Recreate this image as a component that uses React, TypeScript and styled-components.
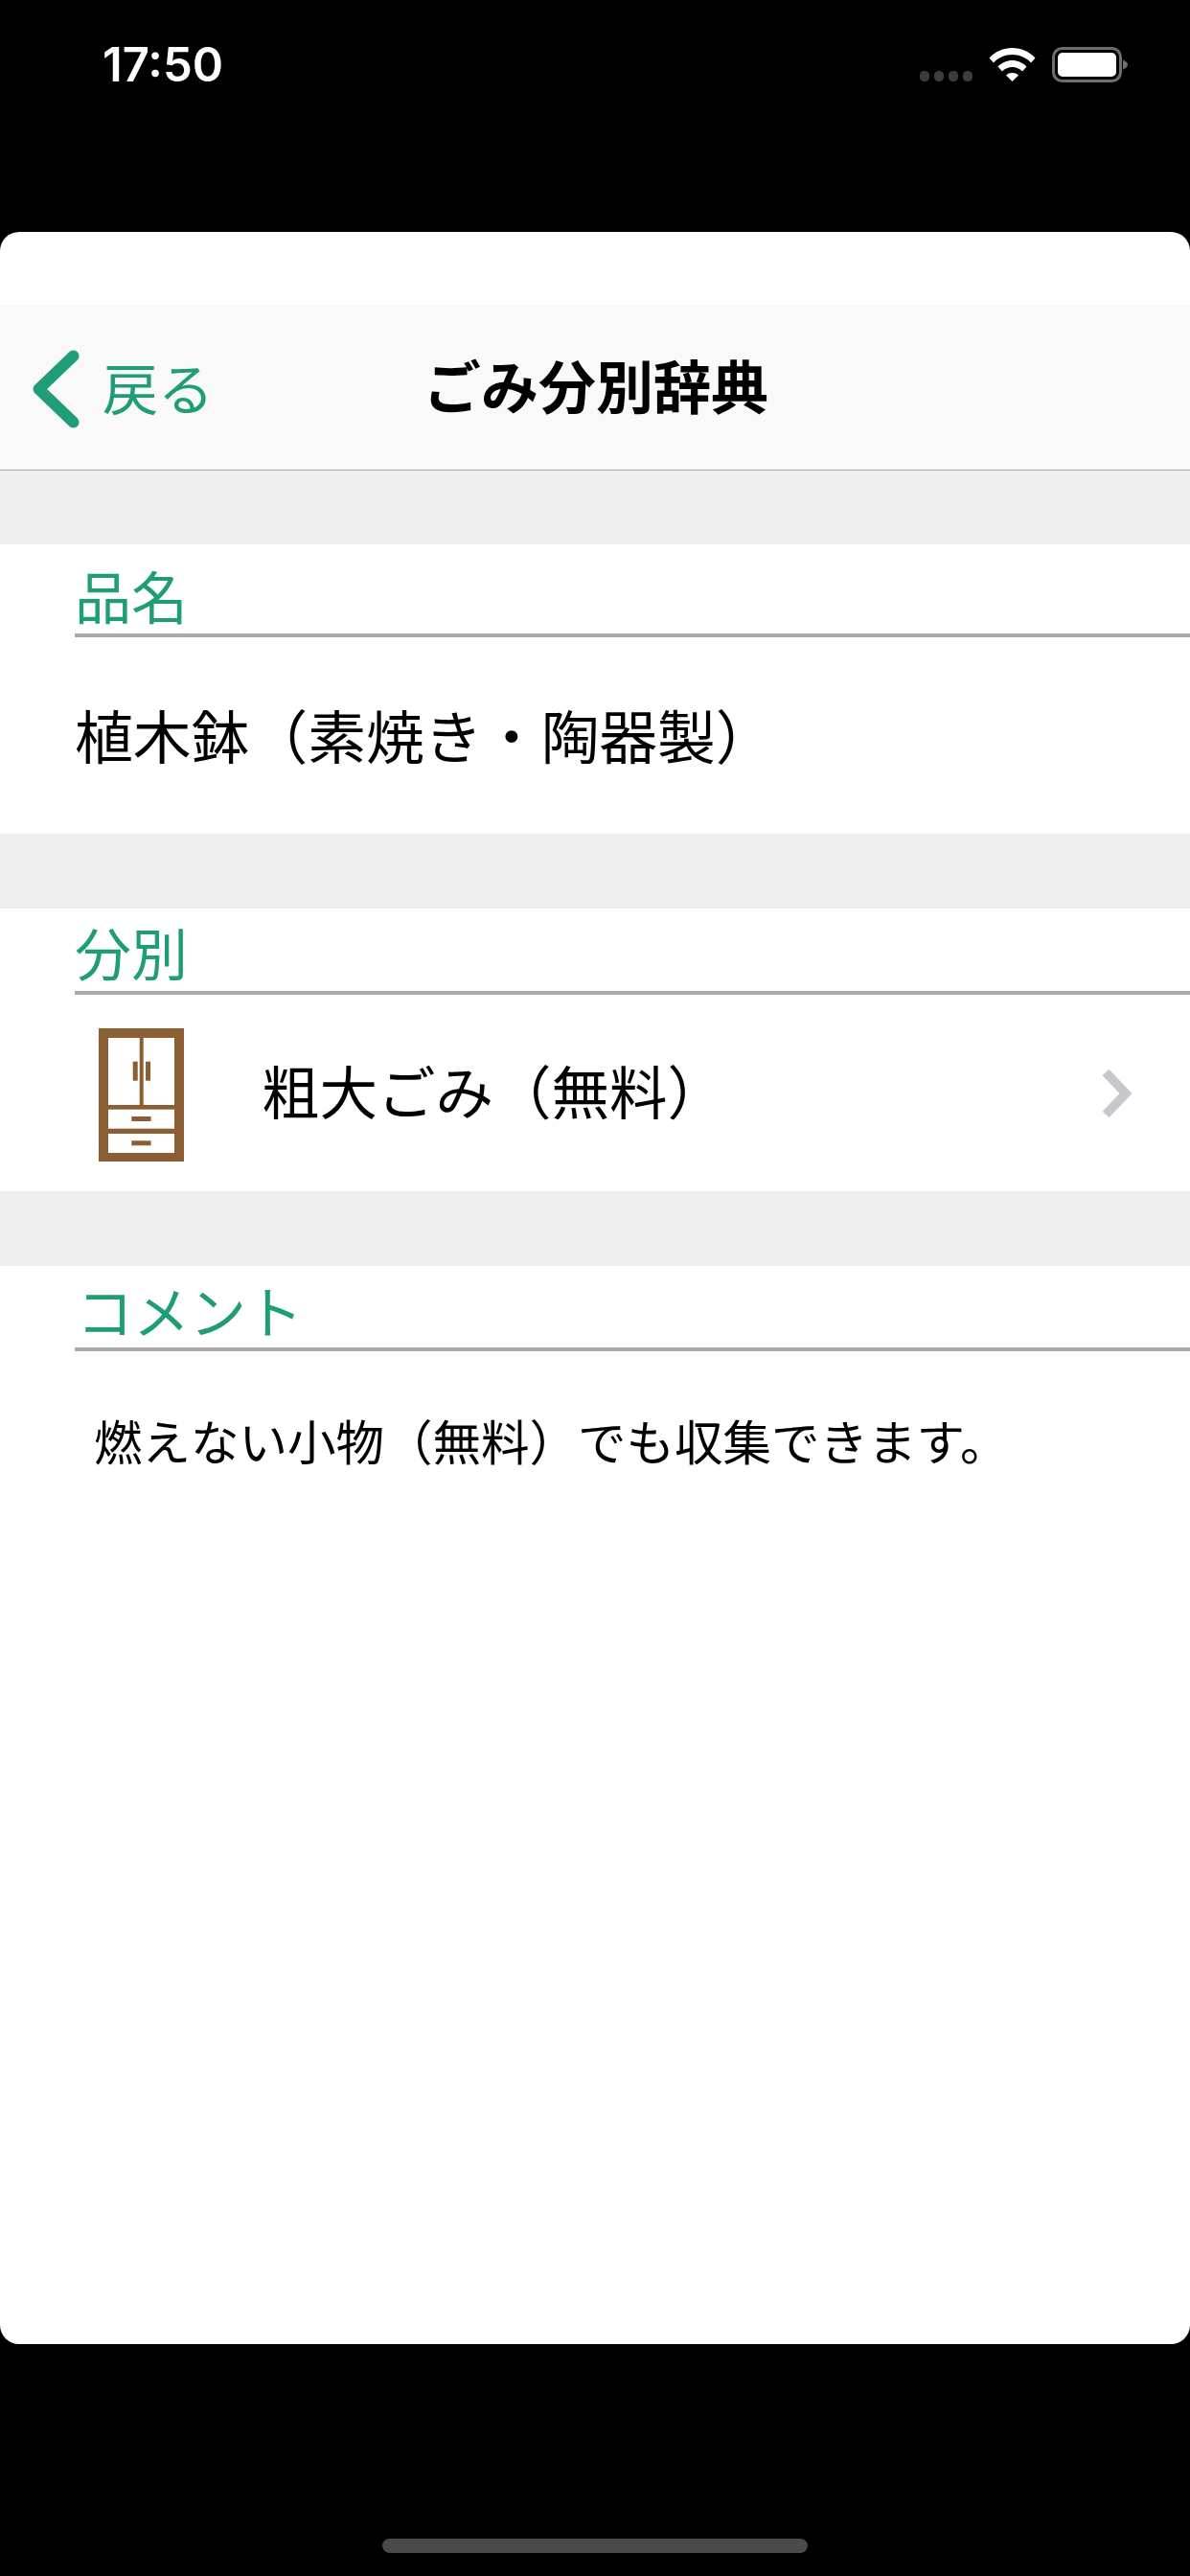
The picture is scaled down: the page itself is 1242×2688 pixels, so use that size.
import React from "react";
import styled, { createGlobalStyle } from "styled-components";

const green = "#1f9d76";
const jp = `"Noto Sans CJK JP", "Noto Sans", sans-serif`;

const Global = createGlobalStyle`
  html, body { margin: 0; padding: 0; background: #000; }
  body { font-family: ${jp}; }
`;

const Screen = styled.div`
  width: 1242px;
  height: 2688px;
  background: #000;
  display: flex;
  flex-direction: column;
  overflow: hidden;
`;

const StatusBar = styled.div`
  height: 242px;
  flex: none;
  box-sizing: border-box;
  padding: 42px 64px 0 107px;
  display: flex;
  align-items: flex-start;
  justify-content: space-between;
`;

const Time = styled.div`
  font-family: Inter, "Liberation Sans", sans-serif;
  font-size: 49px;
  line-height: 52px;
  font-weight: 600;
  color: #fff;
`;

const StatusIcons = styled.div`
  display: flex;
  align-items: flex-start;
  padding-top: 7px;
`;

const Sheet = styled.div`
  height: 2204px;
  flex: none;
  background: #fff;
  border-radius: 20px;
  display: flex;
  flex-direction: column;
  overflow: hidden;
`;

const NavBar = styled.div`
  margin-top: 77px;
  height: 171px;
  flex: none;
  box-sizing: border-box;
  background: #f9f9f9;
  position: relative;
  display: flex;
  align-items: center;
  justify-content: center;
  padding: 0 0 8px 2px;
`;

const NavLine = styled.div`
  height: 1px;
  flex: none;
  background: #a7a7a7;
`;

const BackButton = styled.div`
  position: absolute;
  left: 34px;
  top: 46px;
  display: flex;
  align-items: center;
  gap: 24px;
  color: ${green};
  font-size: 58px;
  line-height: 81px;
`;

const BackText = styled.span`
  position: relative;
  top: -3px;
`;

const Title = styled.div`
  font-size: 60px;
  font-weight: 700;
  color: #000;
  line-height: 80px;
`;

const Gap = styled.div<{ $height: number }>`
  height: ${(p) => p.$height}px;
  flex: none;
  background: #efefef;
`;

const Section = styled.div<{ $height: number }>`
  height: ${(p) => p.$height}px;
  flex: none;
  background: #fff;
  display: flex;
  flex-direction: column;
`;

const Label = styled.div<{ $height: number; $top: number; $indent?: number }>`
  flex: none;
  margin-left: 78px;
  padding-left: ${(p) => p.$indent ?? 0}px;
  padding-top: ${(p) => p.$top}px;
  height: ${(p) => p.$height}px;
  box-sizing: border-box;
  border-bottom: 4px solid #a9a9a9;
  font-size: 59px;
  line-height: 60px;
  color: ${green};
`;

const Name = styled.div`
  padding: 65px 0 0 78px;
  font-size: 60.8px;
  line-height: 72px;
  color: #000;
`;

const Row = styled.div`
  flex: 1;
  display: flex;
  align-items: center;
  padding-left: 103px;
  padding-right: 60px;
`;

const RowText = styled.div`
  flex: 1;
  margin-left: 81px;
  font-size: 60.5px;
  line-height: 72px;
  position: relative;
  top: -4px;
  color: #000;
`;

const Comment = styled.div`
  padding: 56px 0 0 98px;
  font-size: 50.5px;
  line-height: 72px;
  color: #000;
`;

const HomeArea = styled.div`
  flex: 1;
  display: flex;
  justify-content: center;
  padding-top: 203px;
`;

const HomeBar = styled.div`
  width: 444px;
  height: 15px;
  border-radius: 8px;
  background: #4a4a4a;
`;

const Wifi = () => (
  <svg width="49" height="36" viewBox="0 0 49 36" style={{ display: "block", marginRight: 17 }}>
    <path d="M0.5 11.5C7 4.5 15.5 1 24.5 1S42 4.5 48.5 11.5L44 16.5C39 11 32 8 24.5 8S10 11 5 16.5Z" fill="#fff" />
    <path d="M9.5 20.5C13.5 16.5 19 14 24.5 14S35.5 16.5 39.5 20.5L35 25.5C32.2 22.7 28.5 21 24.5 21S16.8 22.7 14 25.5Z" fill="#fff" />
    <path d="M18 29.5C19.8 27.8 22 27 24.5 27S29.2 27.8 31 29.5L24.5 36Z" fill="#fff" />
  </svg>
);

const Dots = () => (
  <svg width="55" height="36" viewBox="0 0 55 36" style={{ display: "block", marginRight: 17 }}>
    {[0, 15, 30, 45].map((x) => (
      <rect key={x} x={x} y="25" width="10" height="11" rx="4.5" fill="#3c3c3c" />
    ))}
  </svg>
);

const Battery = () => (
  <svg width="80" height="38" viewBox="0 0 80 38" style={{ display: "block" }}>
    <rect x="1.5" y="1.5" width="70" height="34" rx="9" fill="none" stroke="#6e6e6e" strokeWidth="3" />
    <rect x="6" y="6" width="61" height="25" rx="5" fill="#fff" />
    <path d="M74 13.5C77 14.5 79 16.5 79 18.5S77 22.5 74 23.5Z" fill="#6e6e6e" />
  </svg>
);

const BackChevron = () => (
  <svg width="49" height="82" viewBox="0 0 49 82" style={{ display: "block" }}>
    <path d="M42.5 6.5L6.5 41L42.5 75.5" fill="none" stroke={green} strokeWidth="12" strokeLinecap="round" strokeLinejoin="round" />
  </svg>
);

const Closet = () => (
  <svg width="89" height="139" viewBox="0 0 89 139" style={{ display: "block", marginTop: 4 }}>
    <rect width="89" height="139" fill="#8b5e34" />
    <rect x="10" y="10" width="32.7" height="70" fill="#fff" />
    <rect x="46.7" y="10" width="32.3" height="70" fill="#fff" />
    <rect x="10" y="84.7" width="69" height="20" fill="#fff" />
    <rect x="10" y="110" width="69" height="20" fill="#fff" />
    <rect x="35.7" y="34.7" width="5" height="20" fill="#8b5e34" />
    <rect x="49" y="34.7" width="5" height="20" fill="#8b5e34" />
    <rect x="34.3" y="92" width="20.3" height="5" fill="#8b5e34" />
    <rect x="34.3" y="117.3" width="20.3" height="5" fill="#8b5e34" />
  </svg>
);

const Chevron = () => (
  <svg width="32" height="52" viewBox="0 0 32 52" style={{ display: "block" }}>
    <path d="M4 4L25 26L4 48" fill="none" stroke="#c7c7cc" strokeWidth="9.5" />
  </svg>
);

export default function App() {
  return (
    <Screen>
      <Global />
      <StatusBar>
        <Time>17:50</Time>
        <StatusIcons>
          <Dots />
          <Wifi />
          <Battery />
        </StatusIcons>
      </StatusBar>
      <Sheet>
        <NavBar>
          <BackButton>
            <BackChevron />
            <BackText>戻る</BackText>
          </BackButton>
          <Title>ごみ分別辞典</Title>
        </NavBar>
        <NavLine />
        <Gap $height={77} />
        <Section $height={302}>
          <Label $height={97} $top={23}>品名</Label>
          <Name>植木鉢（素焼き・陶器製）</Name>
        </Section>
        <Gap $height={78} />
        <Section $height={295}>
          <Label $height={90} $top={15}>分別</Label>
          <Row>
            <Closet />
            <RowText>粗大ごみ（無料）</RowText>
            <Chevron />
          </Row>
        </Section>
        <Gap $height={78} />
        <Section $height={400}>
          <Label $height={89} $top={16} $indent={2}>コメント</Label>
          <Comment>燃えない小物（無料）でも収集できます。</Comment>
        </Section>
      </Sheet>
      <HomeArea>
        <HomeBar />
      </HomeArea>
    </Screen>
  );
}
